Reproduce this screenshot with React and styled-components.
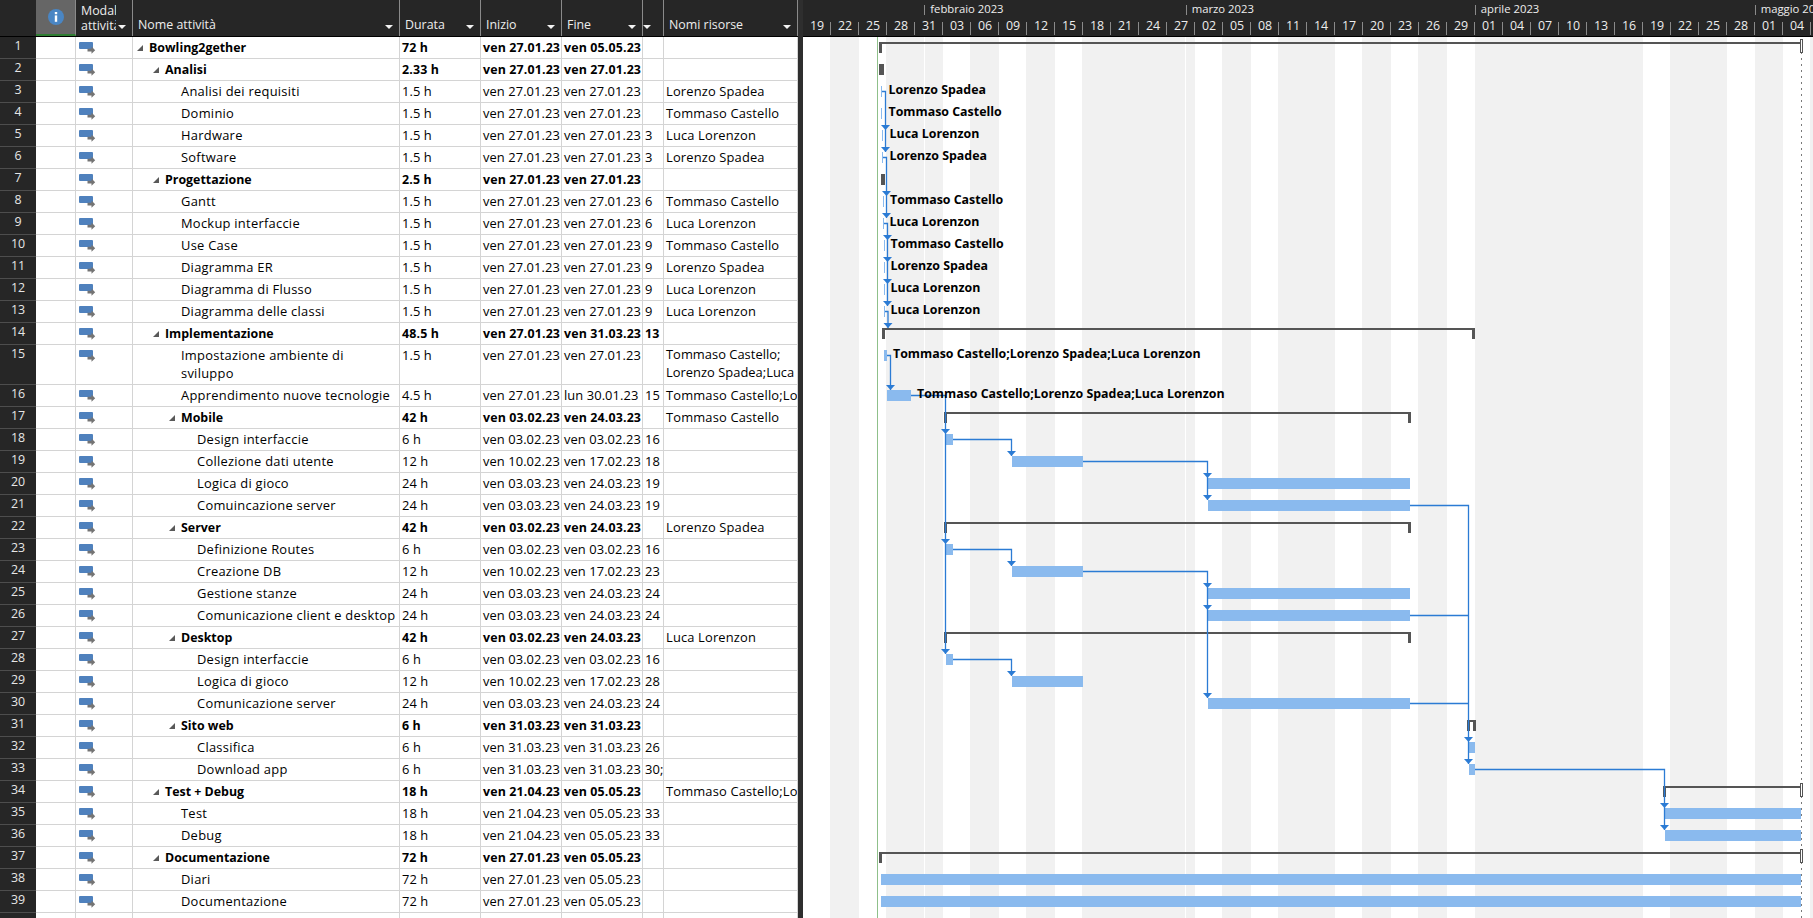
import styled, { createGlobalStyle } from 'styled-components';

const FONT = `"Open Sans", "Noto Sans", sans-serif`;
const COLS = '36px 40px 57px 267px 81px 81px 81px 21px 134px';
const ALL = 'Tommaso Castello;Lorenzo Spadea;Luca Lorenzon';
const LS = 'Lorenzo Spadea';
const TC = 'Tommaso Castello';
const LL = 'Luca Lorenzon';
const V27 = 'ven 27.01.23';
const V03 = 'ven 03.02.23';
const V10 = 'ven 10.02.23';
const V17 = 'ven 17.02.23';
const M03 = 'ven 03.03.23';
const M24 = 'ven 24.03.23';
const M31 = 'ven 31.03.23';
const A21 = 'ven 21.04.23';
const M05 = 'ven 05.05.23';

// level, name, durata, inizio, fine, predecessori, risorse, summary
const tasks = [
    [1, 'Bowling2gether', '72 h', V27, M05, '', '', true],
    [2, 'Analisi', '2.33 h', V27, V27, '', '', true],
    [3, 'Analisi dei requisiti', '1.5 h', V27, V27, '', LS],
    [3, 'Dominio', '1.5 h', V27, V27, '', TC],
    [3, 'Hardware', '1.5 h', V27, V27, '3', LL],
    [3, 'Software', '1.5 h', V27, V27, '3', LS],
    [2, 'Progettazione', '2.5 h', V27, V27, '', '', true],
    [3, 'Gantt', '1.5 h', V27, V27, '6', TC],
    [3, 'Mockup interfaccie', '1.5 h', V27, V27, '6', LL],
    [3, 'Use Case', '1.5 h', V27, V27, '9', TC],
    [3, 'Diagramma ER', '1.5 h', V27, V27, '9', LS],
    [3, 'Diagramma di Flusso', '1.5 h', V27, V27, '9', LL],
    [3, 'Diagramma delle classi', '1.5 h', V27, V27, '9', LL],
    [2, 'Implementazione', '48.5 h', V27, M31, '13', '', true],
    [3, 'Impostazione ambiente di sviluppo', '1.5 h', V27, V27, '', ALL],
    [3, 'Apprendimento nuove tecnologie', '4.5 h', V27, 'lun 30.01.23', '15', ALL],
    [3, 'Mobile', '42 h', V03, M24, '', TC, true],
    [4, 'Design interfaccie', '6 h', V03, V03, '16', ''],
    [4, 'Collezione dati utente', '12 h', V10, V17, '18', ''],
    [4, 'Logica di gioco', '24 h', M03, M24, '19', ''],
    [4, 'Comuincazione server', '24 h', M03, M24, '19', ''],
    [3, 'Server', '42 h', V03, M24, '', LS, true],
    [4, 'Definizione Routes', '6 h', V03, V03, '16', ''],
    [4, 'Creazione DB', '12 h', V10, V17, '23', ''],
    [4, 'Gestione stanze', '24 h', M03, M24, '24', ''],
    [4, 'Comunicazione client e desktop', '24 h', M03, M24, '24', ''],
    [3, 'Desktop', '42 h', V03, M24, '', LL, true],
    [4, 'Design interfaccie', '6 h', V03, V03, '16', ''],
    [4, 'Logica di gioco', '12 h', V10, V17, '28', ''],
    [4, 'Comunicazione server', '24 h', M03, M24, '24', ''],
    [3, 'Sito web', '6 h', M31, M31, '', '', true],
    [4, 'Classifica', '6 h', M31, M31, '26', ''],
    [4, 'Download app', '6 h', M31, M31, '30;21', ''],
    [2, 'Test + Debug', '18 h', A21, M05, '', ALL, true],
    [3, 'Test', '18 h', A21, M05, '33', ''],
    [3, 'Debug', '18 h', A21, M05, '33', ''],
    [2, 'Documentazione', '72 h', V27, M05, '', '', true],
    [3, 'Diari', '72 h', V27, M05, '', ''],
    [3, 'Documentazione', '72 h', V27, M05, '', ''],
];

const days = ['19', '22', '25', '28', '31', '03', '06', '09', '12', '15', '18', '21', '24', '27', '02', '05', '08', '11', '14', '17', '20', '23', '26', '29', '01', '04', '07', '10', '13', '16', '19', '22', '25', '28', '01', '04'];

const months = [
    { label: '', width: 121.3 },
    { label: 'febbraio 2023', width: 261.4 },
    { label: 'marzo 2023', width: 289 },
    { label: 'aprile 2023', width: 280 },
    { label: 'maggio 2023', width: 60 },
];

// everything below is in page pixels, the chart viewBox starts at the pane's own origin
const rowTop = (n) => (n <= 15 ? 36 + 22 * (n - 1) : 384 + 22 * (n - 16));

const bands = [[830, 859], [886, 924], [925, 943], [970, 999], [1026, 1055], [1082, 1185], [1186, 1195], [1222, 1251], [1278, 1335], [1362, 1391], [1418, 1447], [1475, 1643], [1670, 1727], [1755, 1783], [1810, 1813]];

const bars = [
    [3, 881, 882], [4, 881, 882], [5, 882, 883], [6, 882, 883], [8, 883, 884], [9, 883, 884], [10, 884, 885], [11, 884, 885], [12, 884, 885], [13, 884, 885],
    [15, 884, 887], [16, 887, 911], [18, 945, 953], [19, 1012, 1083], [20, 1208, 1410], [21, 1208, 1410],
    [23, 945, 953], [24, 1012, 1083], [25, 1208, 1410], [26, 1208, 1410],
    [28, 946, 953], [29, 1012, 1083], [30, 1208, 1410],
    [32, 1469, 1475], [33, 1469, 1475], [35, 1665, 1801], [36, 1665, 1801], [38, 881, 1801], [39, 881, 1801],
];

// row, left, right, right end still open (project finish)
const summaries = [
    [1, 879, 1803, true], [14, 882, 1475], [17, 944, 1411], [22, 944, 1411], [27, 944, 1411], [34, 1663, 1803, true], [37, 879, 1803, true],
];

const stubs = [[2, 879, 884], [7, 881, 885]];

const labels = [
    [3, 888.5, LS], [4, 888.5, TC], [5, 889.5, LL], [6, 889.5, LS], [8, 890, TC], [9, 889.5, LL], [10, 890.5, TC], [11, 890.5, LS], [12, 890.5, LL], [13, 890.5, LL],
    [15, 893, ALL], [16, 917, ALL],
];

const links = [
    { points: '882,91.5 885.5,91.5 885.5,130', arrows: [[885.5, 130]] },
    { points: '885.5,130 885.5,152', arrows: [[885.5, 152]] },
    { points: '883,157.5 886.5,157.5 886.5,218', arrows: [[886.5, 196], [886.5, 218]] },
    { points: '884,223.5 887.5,223.5 887.5,306', arrows: [[887.5, 240], [887.5, 262], [887.5, 284], [887.5, 306]] },
    { points: '885,311.5 888,311.5 888,328', arrows: [[888, 328]] },
    { points: '887,355.5 890.5,355.5 890.5,390', arrows: [[890.5, 390]] },
    { points: '911,395.5 945.5,395.5 945.5,654', arrows: [[945.5, 434], [945.5, 544], [945.5, 654]] },
    { points: '953,439.5 1011.5,439.5 1011.5,456', arrows: [[1011.5, 456]] },
    { points: '1083,461.5 1207.5,461.5 1207.5,500', arrows: [[1207.5, 478], [1207.5, 500]] },
    { points: '953,549.5 1011.5,549.5 1011.5,566', arrows: [[1011.5, 566]] },
    { points: '1083,571.5 1207.5,571.5 1207.5,698', arrows: [[1207.5, 588], [1207.5, 610], [1207.5, 698]] },
    { points: '953,659.5 1011.5,659.5 1011.5,676', arrows: [[1011.5, 676]] },
    { points: '1410,505.5 1468.5,505.5 1468.5,764', arrows: [[1468.5, 742], [1468.5, 764]] },
    { points: '1410,615.5 1468.5,615.5', arrows: [] },
    { points: '1410,703.5 1468.5,703.5', arrows: [] },
    { points: '1475,769.5 1664.5,769.5 1664.5,830', arrows: [[1664.5, 808], [1664.5, 830]] },
];

export default function App() {
    return (
        <>
            <GlobalStyle />
            <Page>
                <Sheet>
                    <HeaderRow>
                        <HeadBlank />
                        <InfoHead><InfoIcon /></InfoHead>
                        <HeadCell>
                            <StackedTitle>Modal<br />attività</StackedTitle>
                            <SortArrow />
                        </HeadCell>
                        <HeadCell $pad={5}>Nome attività<SortArrow /></HeadCell>
                        <HeadCell>Durata<SortArrow /></HeadCell>
                        <HeadCell>Inizio<SortArrow /></HeadCell>
                        <HeadCell>Fine<SortArrow /></HeadCell>
                        <HeadCell $pad={0}><SortArrow /></HeadCell>
                        <HeadCell>Nomi risorse<SortArrow /></HeadCell>
                    </HeaderRow>
                    {tasks.map((t, i) => (
                        <TaskRow key={i} task={t} num={i + 1} tall={i === 14} />
                    ))}
                    <Row>
                        <NumCell />
                        <Cell /><Cell /><Cell /><Cell /><Cell /><Cell /><Cell /><Cell />
                    </Row>
                </Sheet>
                <Splitter />
                <Gantt>
                    <Timescale>
                        <MonthTier>
                            {months.map((m, i) => (
                                <MonthCell key={i} $width={m.width} $first={i === 0}>{m.label}</MonthCell>
                            ))}
                        </MonthTier>
                        <DayTier>
                            {days.map((d, i) => <DayCell key={i}>{d}</DayCell>)}
                        </DayTier>
                    </Timescale>
                    <Chart />
                </Gantt>
            </Page>
        </>
    );
}

function TaskRow({ task, num, tall }) {
    const [level, name, dur, start, end, pred, res, summary] = task;
    // only the tall row wraps, and it breaks after the first semicolon
    const [firstRes, ...otherRes] = res.split(';');
    return (
        <Row $tall={tall}>
            <NumCell>{num}</NumCell>
            <Cell />
            <Cell><ModeIcon /></Cell>
            <NameCell $level={level} $bold={summary} $wrap={tall}>
                {summary && <Collapse />}
                {name}
            </NameCell>
            <DataCell $bold={summary}>{dur}</DataCell>
            <DataCell $bold={summary}>{start}</DataCell>
            <DataCell $bold={summary}>{end}</DataCell>
            <DataCell $bold={summary}>{pred}</DataCell>
            <ResourceCell $wrap={tall}>
                {tall ? <>{firstRes};<wbr />{otherRes.join(';')}</> : res}
            </ResourceCell>
        </Row>
    );
}

function Chart() {
    return (
        <ChartSvg width="1010" height="881" viewBox="803 37 1010 881">
            {bands.map(([a, b]) => <Band key={a} x={a} y="37" width={b - a} height="881" />)}
            <line x1="877.5" y1="37" x2="877.5" y2="918" stroke="#8fc08a" strokeWidth="1" />
            <line x1="1801.5" y1="40" x2="1801.5" y2="918" stroke="#7a7a7a" strokeWidth="1" strokeDasharray="2 4" />
            {summaries.map(([row, a, b, open]) => (
                <Summary key={row} top={rowTop(row) + 6} left={a} right={b} open={open} />
            ))}
            <Summary top={rowTop(31) + 6} left={1467} right={1476} />
            {stubs.map(([row, a, b]) => <SummaryInk key={row} x={a} y={rowTop(row) + 6} width={b - a} height="11" />)}
            {bars.map(([row, a, b]) => <TaskBar key={row} x={a} y={rowTop(row) + 6} width={b - a} height="11" />)}
            {links.map((l) => (
                <g key={l.points}>
                    <LinkLine points={l.points} />
                    {l.arrows.map(([x, y]) => <LinkArrow key={y} points={`${x - 4.5},${y - 5} ${x + 4.5},${y - 5} ${x},${y}`} />)}
                </g>
            ))}
            {labels.map(([row, x, text]) => <BarLabel key={row} x={x} y={rowTop(row) + 14}>{text}</BarLabel>)}
        </ChartSvg>
    );
}

function Summary({ top, left, right, open }) {
    return (
        <>
            <SummaryInk x={left} y={top} width={right - left} height="2" />
            <SummaryInk x={left} y={top} width="3" height="11" />
            {open
                ? <rect x={right - 2.5} y={top - 2.5} width="2" height="13" fill="#fff" stroke="#555" strokeWidth="1" shapeRendering="crispEdges" />
                : <SummaryInk x={right - 3} y={top} width="3" height="11" />}
        </>
    );
}

function InfoIcon() {
    return (
        <svg width="16" height="16" viewBox="0 0 16 16">
            <circle cx="8" cy="8" r="8" fill="#4a86c4" />
            <rect x="6.8" y="3" width="2.4" height="2.2" fill="#fff" />
            <rect x="6.8" y="6.4" width="2.4" height="6.4" fill="#fff" />
        </svg>
    );
}

function ModeIcon() {
    return (
        <ModeSvg width="17" height="12" viewBox="0 0 17 12">
            <rect x="0" y="0" width="14" height="7" rx="1" fill="#4f81bd" />
            <path d="M8.5 6.8h4V4.6L16.2 8.2 12.5 11.8V9.6h-4z" fill="#747474" />
        </ModeSvg>
    );
}

function SortArrow() {
    return (
        <ArrowSvg width="8" height="4" viewBox="0 0 8 4">
            <path d="M0 0h8L4 4z" fill="#f2f2f2" />
        </ArrowSvg>
    );
}

function Collapse() {
    return (
        <CollapseSvg width="6" height="6" viewBox="0 0 6 6">
            <path d="M6 0v6H0z" fill="#595959" />
        </CollapseSvg>
    );
}

const GlobalStyle = createGlobalStyle`
    html, body {
        margin: 0;
        padding: 0;
        height: 100%;
        overflow: hidden;
        background: #fff;
    }
`;

const Page = styled.div`
    display: flex;
    width: 1813px;
    height: 918px;
    overflow: hidden;
    font-family: ${FONT};
    font-size: 12.4px;
    color: #000;
`;

const Sheet = styled.div`
    width: 798px;
    flex: none;
`;

const Splitter = styled.div`
    width: 5px;
    flex: none;
    background: #2e2e2e;
`;

const HeaderRow = styled.div`
    display: grid;
    grid-template-columns: ${COLS};
    height: 37px;
    background: #262626;
    border-bottom: 1px solid #000;
    box-sizing: border-box;
`;

const HeadBlank = styled.div``;

const InfoHead = styled.div`
    display: flex;
    align-items: center;
    justify-content: center;
    background: #666;
    border-bottom: 2px solid #2f7d32;
    border-right: 1px solid #8a8a8a;
    height: 36px;
    box-sizing: border-box;
`;

const HeadCell = styled.div`
    display: flex;
    align-items: flex-end;
    justify-content: space-between;
    padding: 0 ${(p) => (p.$pad === 0 ? 5 : 6)}px 3px ${(p) => p.$pad ?? 5}px;
    border-right: 1px solid #8a8a8a;
    color: #ededed;
    line-height: 17px;
    white-space: nowrap;
    overflow: hidden;
    min-width: 0;
`;

const StackedTitle = styled.div`
    width: 35px;
    overflow: hidden;
    line-height: 15px;
`;

const ArrowSvg = styled.svg`
    flex: none;
    margin-bottom: 4px;
`;

const Row = styled.div`
    display: grid;
    grid-template-columns: ${COLS};
    height: ${(p) => (p.$tall ? 40 : 22)}px;
`;

const Cell = styled.div`
    border-right: 1px solid #d4d4d4;
    border-bottom: 1px solid #d4d4d4;
    overflow: hidden;
    min-width: 0;
`;

const NumCell = styled.div`
    background: #262626;
    color: #e6e6e6;
    border-bottom: 1px solid #4d4d4d;
    text-align: center;
    line-height: 18px;
`;

const DataCell = styled(Cell)`
    padding-left: 2px;
    line-height: ${(p) => (p.$bold ? 22 : 21)}px;
    font-size: ${(p) => (p.$bold ? 12.4 : 12.9)}px;
    font-weight: ${(p) => (p.$bold ? 700 : 400)};
    letter-spacing: ${(p) => (p.$bold ? 0.15 : 0.08)}px;
    white-space: nowrap;
`;

const ResourceCell = styled(Cell)`
    padding-left: 2px;
    font-size: 12.9px;
    letter-spacing: ${(p) => (p.$wrap ? 0.02 : 0.16)}px;
    line-height: ${(p) => (p.$wrap ? 18 : 21)}px;
    white-space: ${(p) => (p.$wrap ? 'normal' : 'nowrap')};
`;

const NameCell = styled(Cell)`
    position: relative;
    padding: ${(p) => (p.$bold ? 2 : 1)}px ${(p) => (p.$wrap ? 28 : 0)}px 0 ${(p) => 16 + 16 * (p.$level - 1)}px;
    font-size: ${(p) => (p.$bold ? 12.4 : 12.9)}px;
    font-weight: ${(p) => (p.$bold ? 700 : 400)};
    letter-spacing: ${(p) => (p.$bold ? 0 : 0.27)}px;
    line-height: 18px;
    white-space: ${(p) => (p.$wrap ? 'normal' : 'nowrap')};
`;

const ModeSvg = styled.svg`
    display: block;
    margin: 5px 0 0 3px;
`;

const CollapseSvg = styled.svg`
    position: absolute;
    top: 8px;
    margin-left: -12px;
`;

const Gantt = styled.div`
    flex: 1;
    min-width: 0;
`;

const Timescale = styled.div`
    height: 37px;
    box-sizing: border-box;
    background: #262626;
    border-bottom: 1px solid #000;
    color: #ededed;
    overflow: hidden;
`;

const MonthTier = styled.div`
    display: flex;
    height: 18px;
`;

const MonthCell = styled.div`
    flex: none;
    width: ${(p) => p.$width}px;
    box-sizing: border-box;
    padding-left: 6px;
    font-size: 11.3px;
    line-height: 18px;
    white-space: nowrap;
    overflow: hidden;
    background: ${(p) => (p.$first ? 'none' : 'linear-gradient(#8a8a8a, #8a8a8a) left 5px / 1px 10px no-repeat')};
`;

const DayTier = styled.div`
    display: grid;
    grid-template-columns: repeat(36, 28px);
    height: 18px;
`;

const DayCell = styled.div`
    text-align: center;
    line-height: 16px;
    background: linear-gradient(#8a8a8a, #8a8a8a) right 4px / 1px 13px no-repeat;
`;

const ChartSvg = styled.svg`
    display: block;
`;

const Band = styled.rect`
    fill: #f1f1f1;
`;

const TaskBar = styled.rect`
    fill: #8abaee;
`;

const SummaryInk = styled.rect`
    fill: #555;
`;

const LinkLine = styled.polyline`
    fill: none;
    stroke: #2b7bd4;
    stroke-width: 1.3;
`;

const LinkArrow = styled.polygon`
    fill: #2b7bd4;
`;

const BarLabel = styled.text`
    font-family: ${FONT};
    font-size: 12.4px;
    font-weight: 700;
    fill: #000;
`;
